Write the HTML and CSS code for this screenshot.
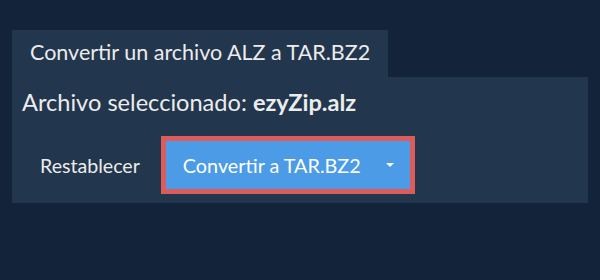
FILE: index.html
```html
<!doctype html>
<html>
<head>
	<title>Convertir ALZ a TAR.BZ2</title>
	<link rel="stylesheet" href="styles.css">
</head>
<body>
	<div class="container">
		<div class="tab">Convertir un archivo ALZ a TAR.BZ2</div>
		<div class="panel">
			<p class="file-name">Archivo seleccionado: <b>ezyZip.alz</b></p>
			<div class="actions">
				<span class="btn-reset">Restablecer</span>
				<div class="btn-convert">
					<span class="label">Convertir a TAR.BZ2</span>
					<span class="caret"></span>
				</div>
			</div>
		</div>
	</div>
</body>
</html>
```

FILE: styles.css
```css
body
{
	margin:0;
	background-color:#12233a;
	font-family:Lato, "Liberation Sans", sans-serif;
	color:#ececec;
}
.container
{
	padding:30px 12px 0 12px;
}
.tab
{
	display:inline-block;
	background-color:#22364d;
	font-size:21.5px;
	padding:0 18px;
	height:47px;
	line-height:45px;
}
.panel
{
	background-color:#22364d;
	height:126px;
	padding:0 10px;
}
.file-name
{
	margin:0;
	padding-top:10px;
	font-size:23.6px;
	line-height:30px;
}
.file-name b
{
	font-weight:bold;
}
.actions
{
	display:flex;
	align-items:center;
	margin-top:19px;
}
.btn-reset
{
	font-size:19.6px;
	padding:0 18px;
	margin-right:3px;
}
.btn-convert
{
	display:flex;
	align-items:center;
	background-color:#4b9be6;
	border:5px solid #dc5b5b;
	height:48px;
	width:244px;
	box-sizing:content-box;
	font-size:19.8px;
	color:#fff;
}
.label
{
	padding-left:17px;
	flex:1;
}
.caret
{
	width:0;
	height:0;
	border-left:4px solid transparent;
	border-right:4px solid transparent;
	border-top:4px solid #fff;
	margin-right:16px;
}
```
